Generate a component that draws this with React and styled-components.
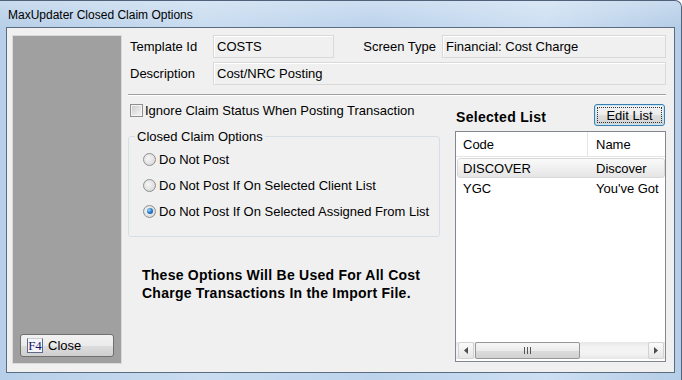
import React from 'react'
import styled, { createGlobalStyle } from 'styled-components'

const GlobalStyle = createGlobalStyle`
    html, body {
        margin: 0;
        padding: 0;
        background: #ffffff;
    }
    body {
        font-family: "Liberation Sans", Arial, sans-serif;
        font-size: 13px;
        color: #000000;
    }
`

const Window = styled.div`
    width: 682px;
    height: 380px;
    box-sizing: border-box;
    display: flex;
    flex-direction: column;
    background: linear-gradient(to right, #b7cfe8 0%, #c9dcf0 30%, #bcd3ec 55%, #cddff2 80%, #b5cde7 100%);
    border-top: 1px solid #50617a;
    border-right: 1px solid #50617a;
    border-top-right-radius: 7px;
    overflow: hidden;
`

const TitleBar = styled.div`
    height: 26px;
    display: flex;
    align-items: center;
    padding: 2px 0 0 8px;
    box-sizing: border-box;
    font-size: 12px;
    background: linear-gradient(to bottom, rgba(255, 255, 255, 0.25), rgba(255, 255, 255, 0));
`

const Client = styled.div`
    flex: 1;
    min-height: 0;
    margin: 0 6px 7px 6px;
    border: 1px solid #5b6b80;
    background: #f0f0f0;
    display: flex;
    gap: 6px;
    padding: 7px 8px 8px 5px;
`

const SidePanel = styled.div`
    width: 110px;
    flex-shrink: 0;
    box-sizing: border-box;
    background: #a0a0a0;
    border: 1px solid #dadada;
    display: flex;
    flex-direction: column;
    justify-content: flex-end;
    padding: 0 6px 6px 7px;
`

const CloseButton = styled.button`
    width: 94px;
    height: 23px;
    box-sizing: border-box;
    display: flex;
    align-items: center;
    gap: 5px;
    padding: 0 0 0 6px;
    border: 1px solid #707070;
    border-radius: 3px;
    background: linear-gradient(to bottom, #f2f2f2 0%, #ebebeb 50%, #dddddd 51%, #cfcfcf 100%);
    font-family: "Liberation Sans", Arial, sans-serif;
    font-size: 13px;
    color: #000000;
`

const KeyCap = styled.span`
    width: 16px;
    height: 15px;
    box-sizing: border-box;
    display: flex;
    align-items: center;
    justify-content: center;
    border: 1px solid #5d6a8a;
    border-top-color: #c8cdd8;
    font-family: "Liberation Serif", "Times New Roman", serif;
    font-size: 13px;
    color: #14146b;
    background: #f6f6fa;
`

const Main = styled.div`
    flex: 1;
    min-width: 0;
    display: flex;
    flex-direction: column;
`

const TopGrid = styled.div`
    display: grid;
    grid-template-columns: 85px 121px 108px minmax(0, 1fr);
    grid-auto-rows: 23px;
    row-gap: 4px;
`

const Label = styled.div`
    display: flex;
    align-items: center;
    justify-content: ${p => (p.$right ? 'flex-end' : 'flex-start')};
    padding: ${p => (p.$right ? '0 6px 0 0' : '0 0 0 2px')};
    white-space: nowrap;
`

const Field = styled.div`
    grid-column: ${p => p.$span || 'auto'};
    box-sizing: border-box;
    display: flex;
    align-items: center;
    padding-left: 3px;
    border: 1px solid #d9d9d9;
    box-shadow: inset 1px 1px 0 #ffffff;
    background: #f0f0f0;
    white-space: nowrap;
    overflow: hidden;
`

const Separator = styled.div`
    margin-top: 9px;
    border-top: 1px solid #a0a0a0;
    border-bottom: 1px solid #ffffff;
`

const Lower = styled.div`
    flex: 1;
    min-height: 0;
    display: grid;
    grid-template-columns: 312px minmax(0, 1fr);
    column-gap: 15px;
`

const LeftCol = styled.div`
    display: flex;
    flex-direction: column;
`

const CheckRow = styled.label`
    margin-top: 7px;
    height: 14px;
    display: flex;
    align-items: center;
    gap: 2px;
    padding-left: 2px;
    white-space: nowrap;
`

const CheckBox = styled.span`
    width: 13px;
    height: 13px;
    box-sizing: border-box;
    border: 1px solid #8e8f8f;
    background: linear-gradient(135deg, #cbcbcb 0%, #e6e6e6 60%, #f7f7f7 100%);
    box-shadow: inset 0 0 0 1px #f4f4f4;
    flex-shrink: 0;
`

const Group = styled.fieldset`
    margin: 12px 0 0 0;
    padding: 0;
    width: 312px;
    box-sizing: border-box;
    border: 1px solid #d5dfe5;
    border-radius: 3px;
    min-width: 0;
`

const Legend = styled.legend`
    margin-left: 6px;
    padding: 0 2px;
    line-height: 15px;
    font-size: 13px;
`

const RadioList = styled.div`
    padding: 2px 0 12px 14px;
    display: flex;
    flex-direction: column;
`

const RadioRow = styled.label`
    height: 26px;
    display: flex;
    align-items: center;
    gap: 3px;
    white-space: nowrap;
`

const Radio = styled.span`
    width: 13px;
    height: 13px;
    box-sizing: border-box;
    border-radius: 50%;
    border: 1px solid #8e8f8f;
    background: radial-gradient(circle at 40% 40%, #f6f6f6 0%, #e2e2e2 55%, #cfcfcf 100%);
    display: flex;
    align-items: center;
    justify-content: center;
    flex-shrink: 0;

    &::after {
        content: '';
        display: ${p => (p.$checked ? 'block' : 'none')};
        width: 6px;
        height: 6px;
        border-radius: 50%;
        background: radial-gradient(circle at 35% 35%, #9fe0fb 0%, #2c7fd0 45%, #0b3f8a 100%);
    }
`

const Note = styled.div`
    margin-top: 29px;
    padding-left: 14px;
    font-weight: bold;
    font-size: 14px;
    letter-spacing: 0.25px;
    line-height: 18px;
    white-space: nowrap;
`

const RightCol = styled.div`
    min-width: 0;
    display: flex;
    flex-direction: column;
`

const ListHead = styled.div`
    margin-top: 8px;
    display: flex;
    justify-content: space-between;
    align-items: flex-end;
`

const ListTitle = styled.div`
    padding-left: 1px;
    font-weight: bold;
    font-size: 14px;
    letter-spacing: 0.3px;
    line-height: 18px;
`

const EditButton = styled.button`
    width: 71px;
    height: 22px;
    margin-right: 1px;
    box-sizing: border-box;
    padding: 2px;
    border: 1px solid #3c7fb1;
    border-radius: 3px;
    background: linear-gradient(to bottom, #f4f4f4 0%, #ececec 50%, #dedede 51%, #d3d3d3 100%);
    box-shadow: inset 0 0 0 1px #c4e5f6;
    font-family: "Liberation Sans", Arial, sans-serif;
    font-size: 13px;
    color: #000000;
`

const FocusRing = styled.span`
    display: flex;
    align-items: center;
    justify-content: center;
    height: 100%;
    box-sizing: border-box;
    border: 1px dotted #333333;
`

const ListView = styled.div`
    flex: 1;
    min-height: 0;
    margin: 5px 0 2px 0;
    border: 1px solid #828790;
    background: #ffffff;
    display: flex;
    flex-direction: column;
    overflow: hidden;
`

const HeaderRow = styled.div`
    height: 24px;
    display: grid;
    grid-template-columns: 132px 160px;
    border-bottom: 1px solid #e5e5e5;
    flex-shrink: 0;
`

const HeaderCell = styled.div`
    display: flex;
    align-items: center;
    padding-left: ${p => (p.$first ? '7px' : '8px')};
    border-right: 1px solid #e5e5e5;
`

const Row = styled.div`
    height: 20px;
    margin: ${p => (p.$selected ? '1px 0 0 1px' : '0 0 0 1px')};
    box-sizing: border-box;
    display: grid;
    grid-template-columns: 131px 160px;
    border: 1px solid ${p => (p.$selected ? '#d9d9d9' : 'transparent')};
    border-radius: 3px;
    background: ${p => (p.$selected ? 'linear-gradient(to bottom, #fafafa, #e5e5e5)' : 'transparent')};
    flex-shrink: 0;
`

const Cell = styled.div`
    display: flex;
    align-items: center;
    padding-left: ${p => (p.$first ? '5px' : '7px')};
    white-space: nowrap;
`

const Spacer = styled.div`
    flex: 1;
`

const ScrollBar = styled.div`
    height: 17px;
    margin: 0 0 2px 0;
    display: flex;
    align-items: stretch;
    background: linear-gradient(to bottom, #e7e7e7, #f3f3f3 30%, #f3f3f3 70%, #e7e7e7);
    flex-shrink: 0;
`

const ArrowButton = styled.div`
    width: 16px;
    box-sizing: border-box;
    margin: ${p => (p.$right ? '0 1px 0 auto' : '0 0 0 2px')};
    border: 1px solid #d2d2d2;
    border-radius: 2px;
    background: linear-gradient(to bottom, #fbfbfb, #e6e6e6);
    display: flex;
    align-items: center;
    justify-content: center;
`

const Thumb = styled.div`
    width: 105px;
    margin-left: 1px;
    box-sizing: border-box;
    border: 1px solid #979797;
    border-radius: 2px;
    background: linear-gradient(to bottom, #f6f6f6 0%, #ececec 50%, #dcdcdc 51%, #d2d2d2 100%);
    display: flex;
    align-items: center;
    justify-content: center;
`

const Arrow = ({ right }) => (
    <svg width="4" height="7" viewBox="0 0 4 7">
        {right ? <path d="M0 0 L4 3.5 L0 7 Z" fill="#4d4d4d" /> : <path d="M4 0 L0 3.5 L4 7 Z" fill="#4d4d4d" />}
    </svg>
)

const Grip = () => (
    <svg width="7" height="7" viewBox="0 0 7 7">
        <path d="M0.5 0 V7 M3.5 0 V7 M6.5 0 V7" stroke="#555555" strokeWidth="1" />
    </svg>
)

const options = [
    { label: 'Do Not Post', checked: false },
    { label: 'Do Not Post If On Selected Client List', checked: false },
    { label: 'Do Not Post If On Selected Assigned From List', checked: true },
]

const items = [
    { code: 'DISCOVER', name: 'Discover', selected: true },
    { code: 'YGC', name: "You've Got", selected: false },
]

export default function App() {
    return (
        <>
            <GlobalStyle />
            <Window>
                <TitleBar>MaxUpdater Closed Claim Options</TitleBar>
                <Client>
                    <SidePanel>
                        <CloseButton>
                            <KeyCap>F4</KeyCap>
                            Close
                        </CloseButton>
                    </SidePanel>
                    <Main>
                        <TopGrid>
                            <Label>Template Id</Label>
                            <Field>COSTS</Field>
                            <Label $right>Screen Type</Label>
                            <Field>Financial: Cost Charge</Field>
                            <Label>Description</Label>
                            <Field $span="2 / 5">Cost/NRC Posting</Field>
                        </TopGrid>
                        <Separator />
                        <Lower>
                            <LeftCol>
                                <CheckRow>
                                    <CheckBox />
                                    Ignore Claim Status When Posting Transaction
                                </CheckRow>
                                <Group>
                                    <Legend>Closed Claim Options</Legend>
                                    <RadioList>
                                        {options.map(o => (
                                            <RadioRow key={o.label}>
                                                <Radio $checked={o.checked} />
                                                {o.label}
                                            </RadioRow>
                                        ))}
                                    </RadioList>
                                </Group>
                                <Note>
                                    These Options Will Be Used For All Cost
                                    <br />
                                    Charge Transactions In the Import File.
                                </Note>
                            </LeftCol>
                            <RightCol>
                                <ListHead>
                                    <ListTitle>Selected List</ListTitle>
                                    <EditButton>
                                        <FocusRing>Edit List</FocusRing>
                                    </EditButton>
                                </ListHead>
                                <ListView>
                                    <HeaderRow>
                                        <HeaderCell $first>Code</HeaderCell>
                                        <HeaderCell>Name</HeaderCell>
                                    </HeaderRow>
                                    {items.map(it => (
                                        <Row key={it.code} $selected={it.selected}>
                                            <Cell $first>{it.code}</Cell>
                                            <Cell>{it.name}</Cell>
                                        </Row>
                                    ))}
                                    <Spacer />
                                    <ScrollBar>
                                        <ArrowButton>
                                            <Arrow />
                                        </ArrowButton>
                                        <Thumb>
                                            <Grip />
                                        </Thumb>
                                        <ArrowButton $right>
                                            <Arrow right />
                                        </ArrowButton>
                                    </ScrollBar>
                                </ListView>
                            </RightCol>
                        </Lower>
                    </Main>
                </Client>
            </Window>
        </>
    )
}
